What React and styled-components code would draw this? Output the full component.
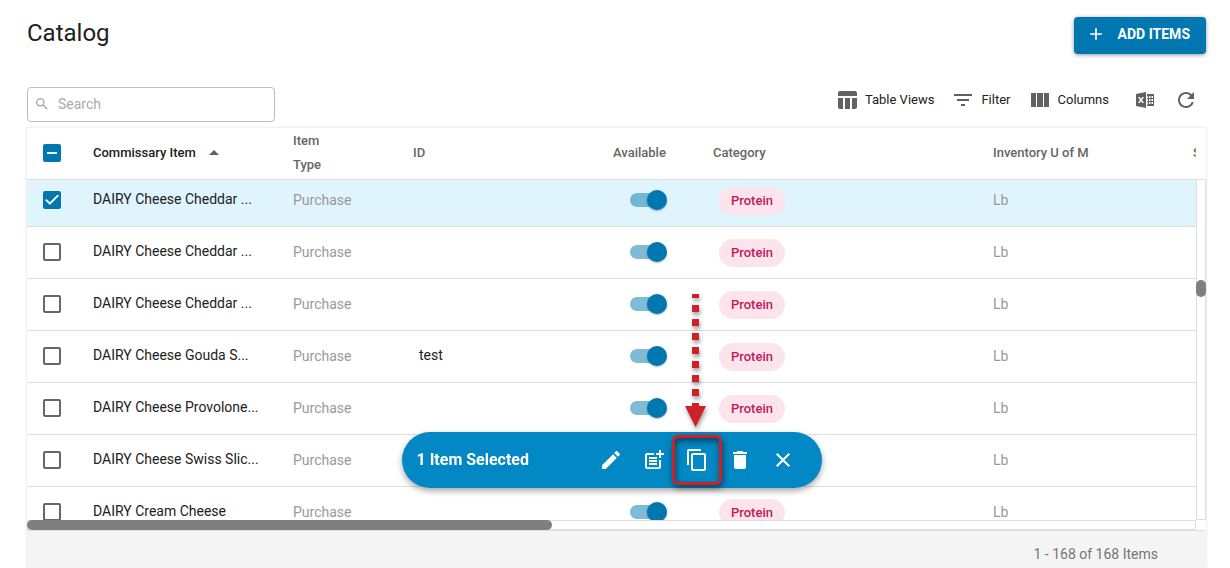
import { useLayoutEffect, useRef, useState } from "react";
import styled, { createGlobalStyle } from "styled-components";
import {
  MdAdd,
  MdArrowDropUp,
  MdClose,
  MdContentCopy,
  MdDelete,
  MdEdit,
  MdFilterList,
  MdPostAdd,
  MdRefresh,
  MdSearch,
  MdTableChart,
} from "react-icons/md";

const ITEMS = [
  { id: 1, name: "DAIRY Cheese Cheddar ...", code: "" },
  { id: 2, name: "DAIRY Cheese Cheddar ...", code: "" },
  { id: 3, name: "DAIRY Cheese Cheddar ...", code: "" },
  { id: 4, name: "DAIRY Cheese Gouda S...", code: "test" },
  { id: 5, name: "DAIRY Cheese Provolone...", code: "" },
  { id: 6, name: "DAIRY Cheese Swiss Slic...", code: "" },
  { id: 7, name: "DAIRY Cream Cheese", code: "" },
];

const DASHES = [11, 25, 39, 53, 67, 81, 95, 109];

function ColumnsIcon() {
  return (
    <svg width="24" height="24" viewBox="0 0 24 24" fill="currentColor" aria-hidden="true">
      <path d="M3 5h5v14H3zM9 5h6v14H9zM16 5h5v14h-5z" />
    </svg>
  );
}

function ExcelIcon() {
  return (
    <svg width="24" height="24" viewBox="0 0 24 24" fill="currentColor" aria-hidden="true">
      <path
        fillRule="evenodd"
        d="M3 6 13 4v16L3 18zM5 9l2 3-2 3h1.700l1.200-2 1.200 2H11L9 12l2-3H9.300L8.100 11 6.800 9z"
      />
      <path
        fillRule="evenodd"
        d="M14 6h7v12h-7v-1.500h1v-2h-1v-1h1v-2h-1v-1h1v-2h-1zM16 8v2h1.500V8zM18.500 8v2H20V8zM16 11v2h1.500v-2zM18.500 11v2H20v-2zM16 14v2h1.500v-2zM18.500 14v2H20v-2z"
      />
    </svg>
  );
}

export default function App() {
  const [selected, setSelected] = useState([1]);
  const scroller = useRef(null);

  useLayoutEffect(() => {
    scroller.current.scrollTop = 5;
  }, []);

  function toggle(id) {
    setSelected((old) => (old.includes(id) ? old.filter((i) => i !== id) : [...old, id]));
  }

  return (
    <Page>
      <GlobalStyle />

      <PageHeader>
        <h1>Catalog</h1>
        <AddButton type="button">
          <MdAdd size={20} />
          ADD ITEMS
        </AddButton>
      </PageHeader>

      <Toolbar>
        <SearchBox>
          <MdSearch size={16} />
          <input type="text" placeholder="Search" aria-label="Search" />
        </SearchBox>
        <Tools>
          <ToolButton type="button"><MdTableChart size={24} />Table Views</ToolButton>
          <ToolButton type="button"><MdFilterList size={24} />Filter</ToolButton>
          <ToolButton type="button"><ColumnsIcon />Columns</ToolButton>
          <ExportButton type="button" aria-label="Export to Excel"><ExcelIcon /></ExportButton>
          <ToolButton type="button" aria-label="Refresh"><MdRefresh size={24} /></ToolButton>
        </Tools>
      </Toolbar>

      <Card>
        <GridArea>
          <Scroller ref={scroller}>
            <Table>
              <colgroup>
                <col width="50" />
                <col width="200" />
                <col width="120" />
                <col width="200" />
                <col width="100" />
                <col width="280" />
                <col width="200" />
                <col width="200" />
              </colgroup>
              <thead>
                <tr>
                  <CheckHead>
                    <Checkbox
                      type="checkbox"
                      aria-label="Select all"
                      ref={(el) => {
                        if (el) el.indeterminate = selected.length > 0 && selected.length < ITEMS.length;
                      }}
                      checked={selected.length === ITEMS.length}
                      onChange={() => setSelected(selected.length ? [] : ITEMS.map((i) => i.id))}
                    />
                  </CheckHead>
                  <Head $active>
                    <SortLabel>Commissary Item<MdArrowDropUp size={24} /></SortLabel>
                  </Head>
                  <Head>Item<br />Type</Head>
                  <Head>ID</Head>
                  <Head>Available</Head>
                  <Head>Category</Head>
                  <Head>Inventory U of M</Head>
                  <Head>S</Head>
                </tr>
              </thead>
              <tbody>
                {ITEMS.map((item) => (
                  <Row key={item.id} $selected={selected.includes(item.id)}>
                    <ControlCell>
                      <Checkbox
                        type="checkbox"
                        aria-label={item.name}
                        checked={selected.includes(item.id)}
                        onChange={() => toggle(item.id)}
                      />
                    </ControlCell>
                    <NameCell>{item.name}</NameCell>
                    <Cell>Purchase</Cell>
                    <CodeCell>{item.code}</CodeCell>
                    <ControlCell>
                      <Switch type="checkbox" role="switch" aria-label="Available" defaultChecked />
                    </ControlCell>
                    <ChipCell><Chip>Protein</Chip></ChipCell>
                    <Cell>Lb</Cell>
                    <Cell />
                  </Row>
                ))}
              </tbody>
            </Table>
          </Scroller>

          <Side>
            <SideHead />
            <VerticalTrack><VerticalThumb /></VerticalTrack>
          </Side>
          <HorizontalTrack><HorizontalThumb /></HorizontalTrack>

          <ActionBar>
            <strong>{selected.length} Item Selected</strong>
            <Actions>
              <ActionButton type="button" aria-label="Edit"><MdEdit size={24} /></ActionButton>
              <ActionButton type="button" aria-label="Add to list"><MdPostAdd size={24} /></ActionButton>
              <ActionButton type="button" aria-label="Copy">
                <MdContentCopy size={24} />
                <Highlight />
                <Arrow width="30" height="142" viewBox="0 0 30 142" aria-hidden="true">
                  <path d="M11 0h7v4h-7z" />
                  {DASHES.map((y) => (
                    <path key={y} d={`M11 ${y}h7v${y === 109 ? 4 : 7}h-7z`} />
                  ))}
                  <path d="M4 112h21l-10.500 21z" />
                </Arrow>
              </ActionButton>
              <ActionButton type="button" aria-label="Delete"><MdDelete size={24} /></ActionButton>
              <ActionButton type="button" aria-label="Close"><MdClose size={24} /></ActionButton>
            </Actions>
          </ActionBar>
        </GridArea>

        <Footer>1 - 168 of 168 Items</Footer>
      </Card>
    </Page>
  );
}

const GlobalStyle = createGlobalStyle`
  * {
    box-sizing: border-box;
  }

  body {
    margin: 0;
    background-color: #fff;
    color: #212121;
    font-family: Roboto, sans-serif;
    font-size: 14px;
  }

  button, input {
    font-family: inherit;
  }
`;

const Page = styled.main`
  min-height: 100vh;
  padding: 17px 24px 0 27px;
  display: flex;
  flex-direction: column;
`;

const PageHeader = styled.header`
  display: flex;
  justify-content: space-between;
  align-items: flex-start;

  h1 {
    margin: 0;
    font-size: 24px;
    line-height: 32px;
    font-weight: 400;
  }
`;

const AddButton = styled.button`
  height: 37px;
  padding: 0 16px 3px 12px;
  display: flex;
  align-items: center;
  gap: 12px;
  border: 0;
  border-radius: 4px;
  background-color: #0077b0;
  color: #fff;
  font-size: 14px;
  font-weight: 700;
  box-shadow: 0 1px 4px rgba(0, 0, 0, 0.4);
`;

const Toolbar = styled.div`
  margin: 33px 0 6px;
  display: flex;
  justify-content: space-between;
  align-items: flex-start;
`;

const SearchBox = styled.label`
  width: 248px;
  height: 35px;
  padding: 0 6px 2px;
  display: flex;
  align-items: center;
  gap: 8px;
  border: 1px solid #bdbdbd;
  border-radius: 4px;
  color: #aaa;

  input {
    flex: 1;
    min-width: 0;
    padding: 0;
    border: 0;
    outline: 0;
    font-size: 14px;
    color: #212121;
  }

  input::placeholder {
    color: #aaa;
  }
`;

const Tools = styled.div`
  padding-right: 8px;
  display: flex;
  align-items: center;
  gap: 17px;
`;

const ToolButton = styled.button`
  height: 25px;
  padding: 0;
  display: flex;
  align-items: center;
  gap: 6px;
  border: 0;
  background: none;
  color: #212121;
  font-size: 13px;

  svg {
    color: #616161;
  }
`;

const ExportButton = styled(ToolButton)`
  margin-left: 7px;
`;

const Card = styled.section`
  flex: 1;
  display: flex;
  flex-direction: column;
  box-shadow: 0 0 3px rgba(0, 0, 0, 0.15);
`;

const GridArea = styled.div`
  position: relative;
  display: grid;
  grid-template-columns: minmax(0, 1fr) 10px;
  grid-template-rows: 392px 10px;
`;

const Scroller = styled.div`
  overflow: auto;
  scrollbar-width: none;
`;

const Table = styled.table`
  width: 1350px;
  table-layout: fixed;
  border-collapse: separate;
  border-spacing: 0;

  thead {
    position: sticky;
    top: 0;
    z-index: 1;
  }
`;

const Head = styled.th`
  height: 52px;
  padding: 0 16px 2px;
  border-bottom: 1px solid #dedede;
  background-color: #fff;
  color: ${(props) => (props.$active ? "#212121" : "#666")};
  font-size: 13px;
  line-height: 24px;
  font-weight: 500;
  text-align: left;
`;

const CheckHead = styled(Head)`
  padding: 0 0 1px;
`;

const SortLabel = styled.span`
  display: flex;
  align-items: center;
  gap: 6px;
  white-space: nowrap;

  svg {
    color: #616161;
  }
`;

const Row = styled.tr`
  background-color: ${(props) => (props.$selected ? "#e0f4fd" : "#fff")};
`;

const Cell = styled.td`
  height: 52px;
  padding: 0 16px 2px;
  border-bottom: 1px solid #dedede;
  color: #999;
  white-space: nowrap;
`;

const ControlCell = styled(Cell)`
  padding: 0 0 1px;
`;

const NameCell = styled(Cell)`
  padding-bottom: 4px;
  color: #212121;
`;

const CodeCell = styled(NameCell)`
  padding-left: 22px;
`;

const ChipCell = styled(Cell)`
  padding: 1px 22px 0;
`;

const Checkbox = styled.input`
  appearance: none;
  width: 18px;
  height: 18px;
  margin: 0 auto;
  display: grid;
  place-items: center;
  border: 2px solid #666;
  border-radius: 2px;

  &:checked, &:indeterminate {
    border-color: #0077b0;
    background-color: #0077b0;
  }

  &:indeterminate::before {
    content: "";
    width: 10px;
    height: 2px;
    background-color: #fff;
  }

  &:checked::before {
    content: "";
    width: 14px;
    height: 11px;
    background-color: #fff;
    clip-path: polygon(0 52%, 10% 40%, 35% 70%, 90% 0, 100% 12%, 35% 96%);
  }
`;

const Switch = styled.input`
  appearance: none;
  width: 34px;
  height: 14px;
  margin: 0 auto;
  display: flex;
  align-items: center;
  border-radius: 7px;
  background-color: #9e9e9e;

  &::before {
    content: "";
    flex: none;
    width: 20px;
    height: 20px;
    border-radius: 50%;
    background-color: #fafafa;
    box-shadow: 0 1px 2px rgba(0, 0, 0, 0.3);
  }

  &:checked {
    background-color: rgba(0, 119, 176, 0.5);
  }

  &:checked::before {
    margin-left: 17px;
    background-color: #0077b0;
  }
`;

const Chip = styled.span`
  width: fit-content;
  height: 28px;
  padding: 0 12px 2px;
  display: flex;
  align-items: center;
  border-radius: 14px;
  background-color: #fce4ec;
  color: #c2185b;
  font-size: 13px;
  font-weight: 500;
`;

const Side = styled.div`
  display: flex;
  flex-direction: column;
`;

const SideHead = styled.div`
  height: 52px;
  border-bottom: 1px solid #dedede;
`;

const VerticalTrack = styled.div`
  flex: 1;
  padding-top: 100px;
  border: 1px solid #dedede;
  border-top: 0;
`;

const VerticalThumb = styled.div`
  height: 17px;
  margin: 0 -1px;
  border-radius: 5px;
  background-color: #7f7f7f;
`;

const HorizontalTrack = styled.div`
  border: 1px solid #dedede;
`;

const HorizontalThumb = styled.div`
  width: 45%;
  height: 10px;
  margin: -1px;
  border-radius: 5px;
  background-color: #7f7f7f;
`;

const ActionBar = styled.div`
  position: absolute;
  z-index: 2;
  left: calc(50% - 215px);
  bottom: 42px;
  width: 420px;
  height: 56px;
  padding: 0 19px 0 15px;
  display: flex;
  justify-content: space-between;
  align-items: center;
  border-radius: 28px;
  background-color: #0288c4;
  color: #fff;
  box-shadow: 0 3px 6px rgba(0, 0, 0, 0.35);

  strong {
    padding-bottom: 2px;
    font-size: 16px;
    font-weight: 700;
  }
`;

const Actions = styled.div`
  display: flex;
  gap: 3px;
`;

const ActionButton = styled.button`
  position: relative;
  width: 40px;
  height: 40px;
  padding: 0;
  display: grid;
  place-items: center;
  border: 0;
  background: none;
  color: #fff;
`;

const Highlight = styled.span`
  position: absolute;
  inset: -5px;
  border: 3px solid #cf2027;
  border-radius: 6px;
  box-shadow: 1px 3px 6px rgba(0, 0, 0, 0.5), inset 1px 3px 6px rgba(0, 0, 0, 0.5);
`;

const Arrow = styled.svg`
  position: absolute;
  left: 4px;
  bottom: 44px;
  fill: #cf2027;
  filter: drop-shadow(1px 3px 2px rgba(0, 0, 0, 0.4));
`;

const Footer = styled.footer`
  flex: 1;
  padding: 11px 48px 0;
  border-top: 1px solid #dedede;
  background-color: #f4f4f4;
  color: #757575;
  line-height: 24px;
  text-align: right;
`;
